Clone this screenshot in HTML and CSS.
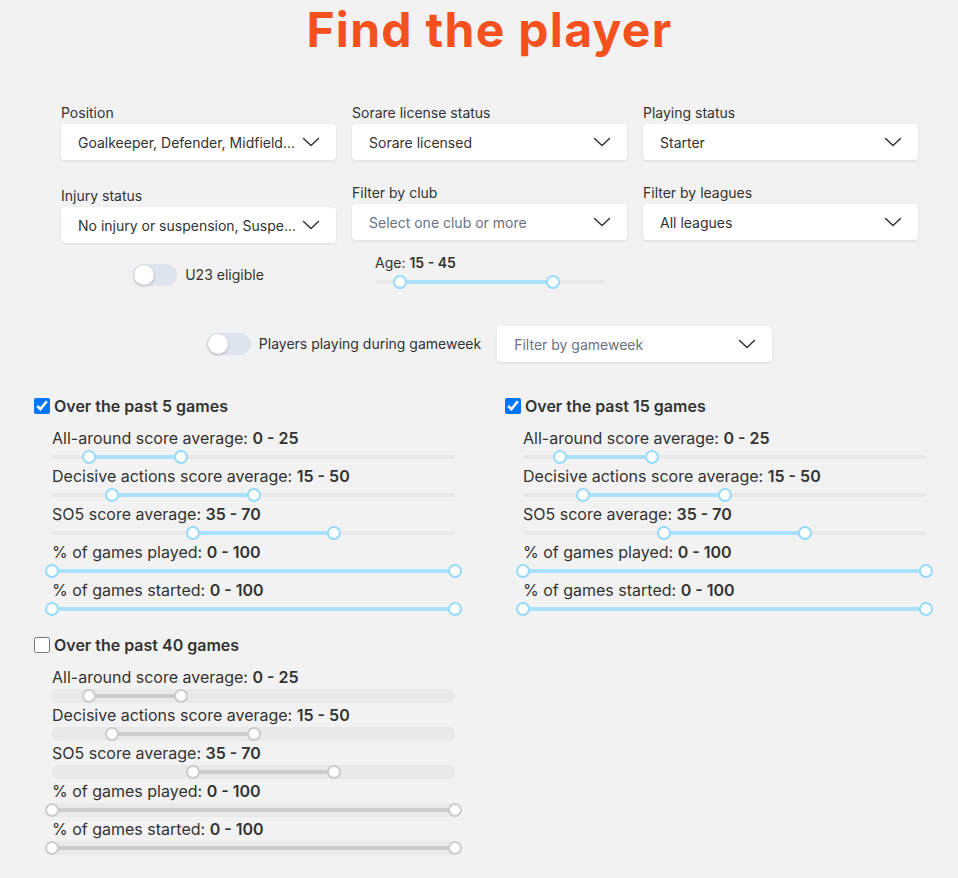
FILE: index.html
```html
<!DOCTYPE html>
<html lang="en">
<head>
<meta charset="utf-8">
<title>Find the player</title>
<link rel="stylesheet" href="styles.css">
</head>
<body>
<main class="page">
  <h1 class="title">Find the player</h1>

  <div class="filters">
    <div class="filter-row">
      <div class="field">
        <div class="field-label">Position</div>
        <div class="select"><span class="select-value">Goalkeeper, Defender, Midfield...</span><svg class="chevron" viewBox="0 0 18 10" width="18" height="10"><path d="M1.5 1.5l7.5 7 7.5-7"/></svg></div>
      </div>
      <div class="field">
        <div class="field-label">Sorare license status</div>
        <div class="select"><span class="select-value">Sorare licensed</span><svg class="chevron" viewBox="0 0 18 10" width="18" height="10"><path d="M1.5 1.5l7.5 7 7.5-7"/></svg></div>
      </div>
      <div class="field">
        <div class="field-label">Playing status</div>
        <div class="select"><span class="select-value">Starter</span><svg class="chevron" viewBox="0 0 18 10" width="18" height="10"><path d="M1.5 1.5l7.5 7 7.5-7"/></svg></div>
      </div>
    </div>

    <div class="filter-row filter-row--second">
      <div class="field field--shifted">
        <div class="field-label">Injury status</div>
        <div class="select"><span class="select-value">No injury or suspension, Suspe...</span><svg class="chevron" viewBox="0 0 18 10" width="18" height="10"><path d="M1.5 1.5l7.5 7 7.5-7"/></svg></div>
      </div>
      <div class="field">
        <div class="field-label">Filter by club</div>
        <div class="select"><span class="select-value select-value--placeholder">Select one club or more</span><svg class="chevron" viewBox="0 0 18 10" width="18" height="10"><path d="M1.5 1.5l7.5 7 7.5-7"/></svg></div>
      </div>
      <div class="field">
        <div class="field-label">Filter by leagues</div>
        <div class="select"><span class="select-value">All leagues</span><svg class="chevron" viewBox="0 0 18 10" width="18" height="10"><path d="M1.5 1.5l7.5 7 7.5-7"/></svg></div>
      </div>
    </div>

    <div class="filter-row filter-row--extras">
      <div class="toggle-cell">
        <label class="toggle"><span class="toggle-track"><span class="toggle-knob"></span></span><span class="toggle-text">U23 eligible</span></label>
      </div>
      <div class="age-cell">
        <div class="age-label">Age: <b>15 - 45</b></div>
        <div class="range range--age">
          <div class="range-rail"></div>
          <div class="range-track" style="left:10.9%;width:66.8%"></div>
          <span class="range-thumb" style="left:10.9%"></span>
          <span class="range-thumb" style="left:77.7%"></span>
        </div>
      </div>
      <div></div>
    </div>

    <div class="gameweek-row">
      <label class="toggle"><span class="toggle-track"><span class="toggle-knob"></span></span><span class="toggle-text">Players playing during gameweek</span></label>
      <div class="select select--gameweek"><span class="select-value select-value--placeholder">Filter by gameweek</span><svg class="chevron" viewBox="0 0 18 10" width="18" height="10"><path d="M1.5 1.5l7.5 7 7.5-7"/></svg></div>
    </div>
  </div>

  <div class="periods">
    <section class="period">
      <label class="period-head"><input type="checkbox" class="period-check" checked> Over the past 5 games</label>
      <div class="period-body">
        <div class="range-label">All-around score average: <b>0 - 25</b></div>
        <div class="range"><div class="range-rail"></div><div class="range-track" style="left:9.1%;width:22.8%"></div><span class="range-thumb" style="left:9.1%"></span><span class="range-thumb" style="left:31.9%"></span></div>
        <div class="range-label">Decisive actions score average: <b>15 - 50</b></div>
        <div class="range"><div class="range-rail"></div><div class="range-track" style="left:15%;width:35%"></div><span class="range-thumb" style="left:15%"></span><span class="range-thumb" style="left:50%"></span></div>
        <div class="range-label">SO5 score average: <b>35 - 70</b></div>
        <div class="range"><div class="range-rail"></div><div class="range-track" style="left:35%;width:35%"></div><span class="range-thumb" style="left:35%"></span><span class="range-thumb" style="left:70%"></span></div>
        <div class="range-label">% of games played: <b>0 - 100</b></div>
        <div class="range"><div class="range-rail"></div><div class="range-track" style="left:0%;width:100%"></div><span class="range-thumb" style="left:0%"></span><span class="range-thumb" style="left:100%"></span></div>
        <div class="range-label">% of games started: <b>0 - 100</b></div>
        <div class="range"><div class="range-rail"></div><div class="range-track" style="left:0%;width:100%"></div><span class="range-thumb" style="left:0%"></span><span class="range-thumb" style="left:100%"></span></div>
      </div>
    </section>

    <section class="period">
      <label class="period-head"><input type="checkbox" class="period-check" checked> Over the past 15 games</label>
      <div class="period-body">
        <div class="range-label">All-around score average: <b>0 - 25</b></div>
        <div class="range"><div class="range-rail"></div><div class="range-track" style="left:9.1%;width:22.8%"></div><span class="range-thumb" style="left:9.1%"></span><span class="range-thumb" style="left:31.9%"></span></div>
        <div class="range-label">Decisive actions score average: <b>15 - 50</b></div>
        <div class="range"><div class="range-rail"></div><div class="range-track" style="left:15%;width:35%"></div><span class="range-thumb" style="left:15%"></span><span class="range-thumb" style="left:50%"></span></div>
        <div class="range-label">SO5 score average: <b>35 - 70</b></div>
        <div class="range"><div class="range-rail"></div><div class="range-track" style="left:35%;width:35%"></div><span class="range-thumb" style="left:35%"></span><span class="range-thumb" style="left:70%"></span></div>
        <div class="range-label">% of games played: <b>0 - 100</b></div>
        <div class="range"><div class="range-rail"></div><div class="range-track" style="left:0%;width:100%"></div><span class="range-thumb" style="left:0%"></span><span class="range-thumb" style="left:100%"></span></div>
        <div class="range-label">% of games started: <b>0 - 100</b></div>
        <div class="range"><div class="range-rail"></div><div class="range-track" style="left:0%;width:100%"></div><span class="range-thumb" style="left:0%"></span><span class="range-thumb" style="left:100%"></span></div>
      </div>
    </section>

    <section class="period">
      <label class="period-head"><input type="checkbox" class="period-check"> Over the past 40 games</label>
      <div class="period-body">
        <div class="range-label">All-around score average: <b>0 - 25</b></div>
        <div class="range range--disabled"><div class="range-rail"></div><div class="range-track" style="left:9.1%;width:22.8%"></div><span class="range-thumb" style="left:9.1%"></span><span class="range-thumb" style="left:31.9%"></span></div>
        <div class="range-label">Decisive actions score average: <b>15 - 50</b></div>
        <div class="range range--disabled"><div class="range-rail"></div><div class="range-track" style="left:15%;width:35%"></div><span class="range-thumb" style="left:15%"></span><span class="range-thumb" style="left:50%"></span></div>
        <div class="range-label">SO5 score average: <b>35 - 70</b></div>
        <div class="range range--disabled"><div class="range-rail"></div><div class="range-track" style="left:35%;width:35%"></div><span class="range-thumb" style="left:35%"></span><span class="range-thumb" style="left:70%"></span></div>
        <div class="range-label">% of games played: <b>0 - 100</b></div>
        <div class="range range--disabled"><div class="range-rail"></div><div class="range-track" style="left:0%;width:100%"></div><span class="range-thumb" style="left:0%"></span><span class="range-thumb" style="left:100%"></span></div>
        <div class="range-label">% of games started: <b>0 - 100</b></div>
        <div class="range range--disabled"><div class="range-rail"></div><div class="range-track" style="left:0%;width:100%"></div><span class="range-thumb" style="left:0%"></span><span class="range-thumb" style="left:100%"></span></div>
      </div>
    </section>
  </div>
</main>
</body>
</html>
```

FILE: styles.css
```css
html, body {
  margin: 0;
  padding: 0;
}

body {
  background: #f2f2f2;
  color: #333333;
  font-family: Inter, "Noto Sans", "Liberation Sans", sans-serif;
  font-size: 14px;
}

.page {
  width: 958px;
  min-height: 878px;
}

.title {
  margin: 0 40px 0 61px;
  padding-top: 1px;
  text-align: center;
  font-family: Inter, "Noto Sans", sans-serif;
  font-weight: 700;
  font-size: 48px;
  line-height: 58px;
  height: 55px;
  color: #f4511e;
  letter-spacing: 1.3px;
}

.filters {
  margin: 47px 40px 0 61px;
}

.filter-row {
  display: grid;
  grid-template-columns: repeat(3, minmax(0, 1fr));
  column-gap: 16px;
}

.filter-row--second {
  margin-top: 23px;
}

.filter-row--extras {
  margin-top: 10px;
}

.field {
  min-width: 0;
}

.field--shifted {
  margin-top: 3px;
}

.field-label {
  line-height: 20px;
  height: 20px;
  margin-bottom: 1px;
}

.select {
  display: flex;
  align-items: center;
  height: 36px;
  box-sizing: border-box;
  padding: 0 16px 0 17px;
  background: #ffffff;
  border-radius: 4px;
  box-shadow: 0 1px 3px rgba(0, 0, 0, 0.1);
  gap: 8px;
}

.select-value {
  flex: 1;
  min-width: 0;
  white-space: nowrap;
  color: #333333;
}

.select-value--placeholder {
  color: #6b7280;
}

.chevron {
  flex: none;
  fill: none;
  stroke: #333333;
  stroke-width: 1.5;
  stroke-linecap: round;
  stroke-linejoin: round;
}

.toggle-cell {
  display: flex;
  justify-content: center;
  align-items: flex-start;
  padding-top: 11px;
}

.toggle {
  display: flex;
  align-items: center;
  gap: 8px;
}

.toggle-track {
  position: relative;
  display: block;
  width: 44px;
  height: 22px;
  border-radius: 11px;
  background: #dfe5ee;
}

.toggle-knob {
  position: absolute;
  top: 1px;
  left: 1px;
  width: 20px;
  height: 20px;
  border-radius: 50%;
  background: #ffffff;
  box-shadow: 0 1px 3px rgba(0, 0, 0, 0.25);
}

.toggle-text {
  line-height: 20px;
  color: #333333;
}

.age-cell {
  padding: 0 23px;
}

.age-label {
  line-height: 20px;
  height: 20px;
  font-size: 14px;
}

.age-label b {
  font-weight: 600;
}

.range--age {
  margin: 0;
}

.gameweek-row {
  display: flex;
  justify-content: center;
  align-items: center;
  gap: 16px;
  margin-top: 35px;
}

.select--gameweek {
  width: 275px;
}

.periods {
  display: grid;
  grid-template-columns: 471px 471px;
  row-gap: 17px;
  margin: 34px 0 0 34px;
}

.period-head {
  display: flex;
  align-items: center;
  height: 20px;
  font-size: 16px;
  font-weight: 600;
  color: #333333;
}

.period-check {
  width: 16px;
  height: 16px;
  margin: 0 4px 0 0;
  accent-color: #0075ff;
}

.period-body {
  width: 403px;
  padding-left: 18px;
  margin-top: 12px;
}

.range-label {
  line-height: 20px;
  height: 20px;
  font-size: 16px;
  color: #333333;
}

.range-label b {
  font-weight: 600;
}

.range {
  position: relative;
  height: 14px;
  margin: 2px 0 2px;
  border-radius: 6px;
}

.range-rail {
  position: absolute;
  left: 0;
  right: 0;
  top: 5px;
  height: 4px;
  border-radius: 6px;
  background: #e9e9e9;
}

.range-track {
  position: absolute;
  top: 5px;
  height: 4px;
  border-radius: 6px;
  background: #abe2fb;
}

.range-thumb {
  position: absolute;
  top: 0;
  width: 14px;
  height: 14px;
  margin-left: -7px;
  box-sizing: border-box;
  border: 2px solid #96dbfa;
  border-radius: 50%;
  background: #ffffff;
}

.range--disabled {
  background: #e9e9e9;
}

.range--disabled .range-track {
  background: #cccccc;
}

.range--disabled .range-thumb {
  border-color: #cccccc;
}
```
